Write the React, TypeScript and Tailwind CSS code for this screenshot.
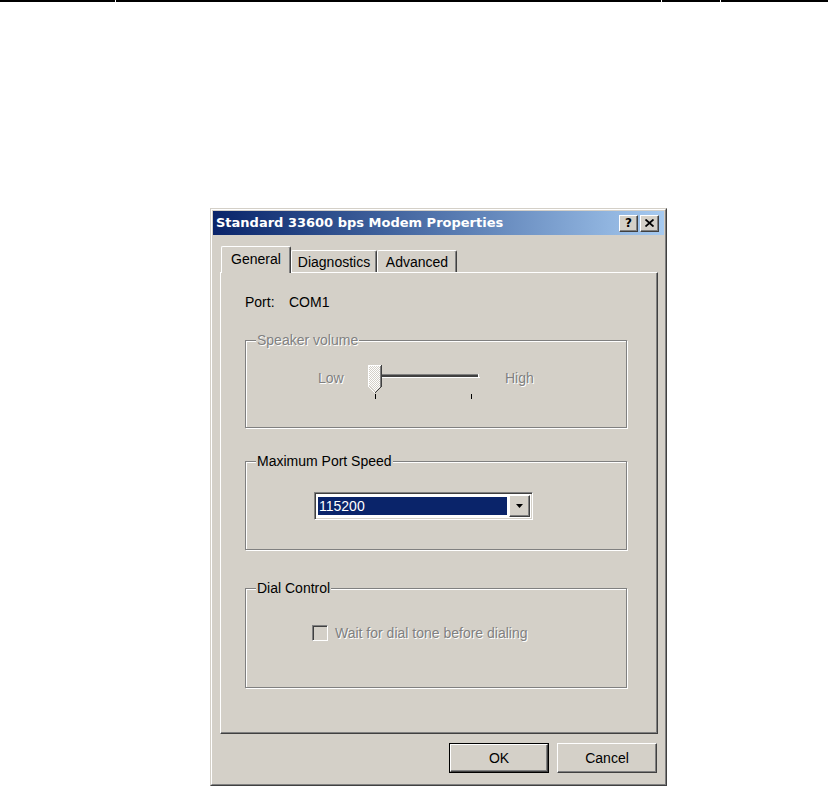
import type { ReactNode } from "react";

const raised =
  "border border-t-white border-l-white border-r-[#404040] border-b-[#404040] shadow-[inset_-1px_-1px_0_#808080]";
const sunken =
  "border border-t-[#808080] border-l-[#808080] border-r-white border-b-white shadow-[inset_1px_1px_0_#404040,inset_-1px_-1px_0_#d4d0c8]";
const etched = "relative border border-[#808080] shadow-[1px_1px_0_#fff,inset_1px_1px_0_#fff]";
const disabledText = "text-[#808080] [text-shadow:1px_1px_0_#fff]";

function CaptionButton({ children }: { children: ReactNode }) {
  return (
    <div className={`w-[19px] h-[17px] bg-[#d4d0c8] flex items-center justify-center ${raised}`}>
      {children}
    </div>
  );
}

function GroupLabel({ text, disabled }: { text: string; disabled?: boolean }) {
  return (
    <span
      className={`absolute left-[10px] -top-[9px] px-px bg-[#d4d0c8] ${disabled ? disabledText : ""}`}
    >
      {text}
    </span>
  );
}

function Slider() {
  return (
    <svg width="112" height="35" viewBox="0 0 112 35" shapeRendering="crispEdges">
      <defs>
        <pattern id="dither" width="2" height="2" patternUnits="userSpaceOnUse">
          <rect width="2" height="2" fill="#d4d0c8" />
          <rect width="1" height="1" fill="#fff" />
          <rect x="1" y="1" width="1" height="1" fill="#fff" />
        </pattern>
      </defs>
      {/* track */}
      <rect x="1" y="9" width="110" height="1" fill="#808080" />
      <rect x="2" y="10" width="108" height="2" fill="#404040" />
      <rect x="1" y="12" width="111" height="1" fill="#fff" />
      <rect x="110" y="9" width="1" height="4" fill="#fff" />
      {/* ticks */}
      <rect x="7" y="29" width="1" height="5" fill="#000" />
      <rect x="103" y="29" width="1" height="5" fill="#000" />
      {/* thumb */}
      <polygon points="1,1 13,1 13,21 7,27 1,21" fill="url(#dither)" />
      <rect x="0" y="0" width="14" height="1" fill="#fff" />
      <rect x="0" y="0" width="1" height="22" fill="#fff" />
      <rect x="13" y="0" width="1" height="22" fill="#404040" />
      <rect x="12" y="1" width="1" height="21" fill="#808080" />
      <polyline points="0.5,21.5 7,28" stroke="#fff" fill="none" shapeRendering="auto" />
      <polyline points="13.5,21.5 7,28" stroke="#404040" fill="none" shapeRendering="auto" />
    </svg>
  );
}

function Dialog() {
  return (
    <div className="ml-[210px] mt-[206px] w-[457px] h-[578px] flex flex-col bg-[#d4d0c8] border border-t-[#d4d0c8] border-l-[#d4d0c8] border-r-[#404040] border-b-[#404040]">
      <div className="flex-1 flex flex-col p-px border border-t-white border-l-white border-r-[#808080] border-b-[#808080]">
        {/* Title bar */}
        <div className="h-[24px] flex items-center justify-between pl-[3px] pr-[5px] bg-linear-to-r from-[#0a246a] to-[#a6caf0]">
          <span className="font-['DejaVu_Sans',sans-serif] font-bold text-[13px] text-white">
            Standard 33600 bps Modem Properties
          </span>
          <div className="flex gap-[2px]">
            <CaptionButton>
              <span className="font-['DejaVu_Sans',sans-serif] font-bold text-[12px] leading-none">?</span>
            </CaptionButton>
            <CaptionButton>
              <svg width="9" height="8" viewBox="0 0 9 8">
                <path d="M0.5 0.5 L8.5 7.5 M8.5 0.5 L0.5 7.5" stroke="#000" strokeWidth="1.8" />
              </svg>
            </CaptionButton>
          </div>
        </div>

        <div className="flex flex-col pl-[7px] pr-[6px] pt-[11px]">
          {/* Tabs */}
          <div className="h-[26px] flex items-end pl-px">
            <div className="relative z-10 -mb-px h-[27px] w-[70px] flex items-center justify-center pb-[2px] bg-[#d4d0c8] rounded-t-[2px] border border-b-0 border-t-white border-l-white border-r-[#404040] shadow-[inset_-1px_0_0_#808080]">
              General
            </div>
            <div className="h-[22px] w-[86px] flex items-center justify-center rounded-t-[2px] border border-b-0 border-t-white border-l-white border-r-[#404040] shadow-[inset_-1px_0_0_#808080]">
              Diagnostics
            </div>
            <div className="h-[22px] w-[80px] flex items-center justify-center rounded-t-[2px] border border-b-0 border-t-white border-l-white border-r-[#404040] shadow-[inset_-1px_0_0_#808080]">
              Advanced
            </div>
          </div>

          {/* Panel */}
          <div className="h-[462px] flex flex-col pl-[24px] pt-[21px] border border-t-white border-l-white border-r-[#404040] border-b-[#404040] shadow-[inset_-1px_-1px_0_#808080]">
            <div className="flex">
              <span className="w-[44px]">Port:</span>
              <span>COM1</span>
            </div>

            <div className={`mt-[30px] w-[382px] h-[88px] ${etched}`}>
              <GroupLabel text="Speaker volume" disabled />
              <div className="flex items-start pt-[24px] pl-[72px]">
                <span className={`w-[50px] mt-[5px] ${disabledText}`}>Low</span>
                <Slider />
                <span className={`ml-[25px] mt-[5px] ${disabledText}`}>High</span>
              </div>
            </div>

            <div className={`mt-[33px] w-[382px] h-[89px] ${etched}`}>
              <GroupLabel text="Maximum Port Speed" />
              <div className="pt-[30px] pl-[68px]">
                <div className={`w-[219px] h-[28px] bg-white flex p-[2px] ${sunken}`}>
                  <div className="flex-1 my-[2px] ml-px mr-[2px] bg-[#0a246a] text-white flex items-center pl-px">
                    115200
                  </div>
                  <div className={`w-[21px] bg-[#d4d0c8] flex items-center justify-center ${raised}`}>
                    <svg width="7" height="4" viewBox="0 0 7 4">
                      <polygon points="0,0 7,0 3.5,4" fill="#000" />
                    </svg>
                  </div>
                </div>
              </div>
            </div>

            <div className={`mt-[38px] w-[382px] h-[100px] ${etched}`}>
              <GroupLabel text="Dial Control" />
              <div className="flex items-center pt-[36px] pl-[66px]">
                <div className={`w-[16px] h-[16px] bg-[#d4d0c8] ${sunken}`} />
                <span className={`ml-[7px] ${disabledText}`}>Wait for dial tone before dialing</span>
              </div>
            </div>
          </div>

          {/* Buttons */}
          <div className="flex justify-end gap-[8px] mt-[9px] pr-px">
            <div className="w-[100px] h-[30px] border border-black">
              <div className={`w-full h-full flex items-center justify-center ${raised}`}>OK</div>
            </div>
            <div className={`w-[100px] h-[30px] flex items-center justify-center ${raised}`}>Cancel</div>
          </div>
        </div>
      </div>
    </div>
  );
}

export default function App() {
  return (
    <div className="w-[828px] h-[786px] bg-white overflow-hidden font-['Liberation_Sans',Arial,sans-serif] text-[14px] leading-[16px] text-black">
      <div className="flex h-[2px] gap-px">
        <div className="w-[115px] bg-black" />
        <div className="w-[545px] bg-black" />
        <div className="w-[58px] bg-black" />
        <div className="flex-1 bg-black" />
      </div>
      <Dialog />
    </div>
  );
}
